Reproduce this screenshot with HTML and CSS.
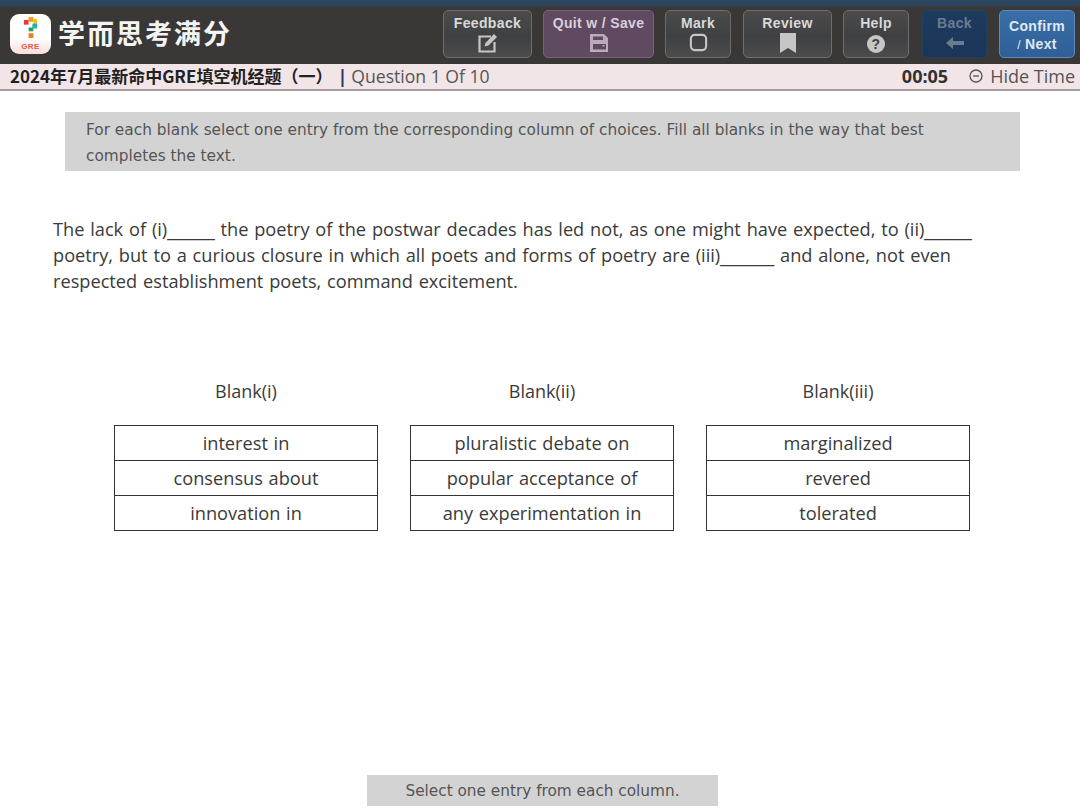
FILE: index.html
```html
<!DOCTYPE html>
<html lang="en">
<head>
<meta charset="utf-8">
<title>GRE</title>
<link rel="stylesheet" href="styles.css">
</head>
<body>
<header class="toolbar">
  <div class="brand">
    <div class="logo">
      <svg class="logo-mark" viewBox="0 0 20 24" width="19" height="23">
        <rect x="3" y="4" width="5" height="5" fill="#e23b3b"/>
        <rect x="8" y="1" width="5" height="5" fill="#f39a1e"/>
        <rect x="13" y="3" width="4" height="6" fill="#f2c21a"/>
        <rect x="12" y="8" width="5" height="5" fill="#22b0b5"/>
        <rect x="8" y="12" width="5" height="4" fill="#2f9e58"/>
        <rect x="8" y="18" width="5" height="5" fill="#ef7d22"/>
      </svg>
      <span class="logo-text">GRE</span>
    </div>
    <span class="brand-name">学而思考满分</span>
  </div>
  <nav class="buttons">
    <button class="btn w-feedback"><span>Feedback</span>
      <svg viewBox="0 0 20 20" width="20" height="20" fill="none" stroke="currentColor" stroke-width="2.200"><path d="M13 3.500H1.500v15h15V9"/><path d="M6.500 13.500l1-3.500 8.500-9 3 3-8.500 8.500z" fill="currentColor" stroke="none"/></svg>
    </button>
    <button class="btn btn-quit w-quit"><span>Quit w / Save</span>
      <svg viewBox="0 0 20 20" width="20" height="20" fill="currentColor"><path fill-rule="evenodd" d="M1 1h14l4 4v14H1zM4 3.500v3.500h10V3.500zM4 11v5.500h13V11z"/><rect x="13.500" y="12" width="2" height="1.500"/></svg>
    </button>
    <button class="btn w-mark"><span>Mark</span>
      <svg viewBox="0 0 20 20" width="19" height="19" fill="none" stroke="currentColor" stroke-width="2.200"><rect x="2" y="2" width="16" height="16" rx="4"/></svg>
    </button>
    <button class="btn w-review gap-review"><span>Review</span>
      <svg viewBox="0 0 16 20" width="16" height="20" fill="currentColor"><path d="M0 0h16v20l-8-5-8 5z"/></svg>
    </button>
    <button class="btn w-help"><span>Help</span>
      <svg class="icon-help" viewBox="0 0 18 18" width="18" height="18"><circle cx="9" cy="9" r="9" fill="currentColor"/><text x="9" y="14" text-anchor="middle" class="help-mark">?</text></svg>
    </button>
    <button class="btn btn-back w-back"><span>Back</span>
      <svg class="icon-back" viewBox="0 0 18 12" width="18" height="12" fill="currentColor"><path d="M0 6l7-6v4h11v4H7v4z"/></svg>
    </button>
    <button class="btn btn-next w-next"><span>Confirm</span><span class="next-line"><small>/</small> Next</span></button>
  </nav>
</header>

<div class="subbar">
  <div class="crumbs">
    <strong class="exam-title">2024年7月最新命中GRE填空机经题（一）</strong>
    <span class="divider">|</span>
    <span class="qnum">Question 1 Of 10</span>
  </div>
  <div class="timer">
    <strong class="clock">00:05</strong>
    <svg class="minus" viewBox="0 0 14 14" width="14" height="14" fill="none" stroke="currentColor" stroke-width="1.300"><circle cx="7" cy="7" r="6"/><path d="M4 7h6"/></svg>
    <span>Hide Time</span>
  </div>
</div>

<main class="content">
  <div class="instructions">For each blank select one entry from the corresponding column of choices. Fill all blanks in the way that best completes the text.</div>
  <p class="question">The lack of (i)<span class="gap">_____</span> the poetry of the postwar decades has led not, as one might have expected, to (ii)<span class="gap">_____</span> poetry, but to a curious closure in which all poets and forms of poetry are (iii)<span class="gap gap-short">______</span> and alone, not even respected establishment poets, command excitement.</p>
  <section class="blanks">
    <div class="blank">
      <h2>Blank(i)</h2>
      <ul><li>interest in</li><li>consensus about</li><li>innovation in</li></ul>
    </div>
    <div class="blank">
      <h2>Blank(ii)</h2>
      <ul><li>pluralistic debate on</li><li>popular acceptance of</li><li>any experimentation in</li></ul>
    </div>
    <div class="blank">
      <h2>Blank(iii)</h2>
      <ul><li>marginalized</li><li>revered</li><li>tolerated</li></ul>
    </div>
  </section>
</main>
<footer class="status">Select one entry from each column.</footer>
</body>
</html>
```
FILE: styles.css
```css
* { box-sizing: border-box; }
html, body { margin: 0; padding: 0; }
body { width: 1080px; height: 808px; overflow: hidden; background: #fff; font-family: "Open Sans", "Noto Sans CJK SC", sans-serif; color: #3a3a3a; display: flex; flex-direction: column; }

.toolbar { height: 64px; background: #3a3836; border-top: 6px solid #2c4560; display: flex; justify-content: space-between; align-items: flex-start; padding: 4px 5px 0 10px; }
.brand { display: flex; align-items: center; gap: 7px; height: 44px; margin-top: 2px; }
.logo { width: 41px; height: 40px; border-radius: 9px; background: linear-gradient(#fff 60%, #fbdcdc); display: flex; flex-direction: column; align-items: center; padding-top: 2px; }
.logo-mark { display: block; }
.logo-text { font: 700 8px/10px "Liberation Sans", sans-serif; color: #e2574c; letter-spacing: .4px; margin-top: 3px; }
.brand-name { font: 700 27px/34px "Noto Sans CJK SC", sans-serif; color: #f4f4f4; letter-spacing: 2px; margin-top: -2px; }

.buttons { display: flex; gap: 11px; }
.btn { height: 48px; padding: 3px 0 0; border: 1px solid #6d6d6d; border-radius: 5px; background: linear-gradient(#4b4b4b, #3f4042 55%, #4c4c4c); color: #d9d9d9; font: 700 14px/18px "Liberation Sans", sans-serif; letter-spacing: .35px; display: flex; flex-direction: column; align-items: center; gap: 1px; }
.btn svg { display: block; color: #c6c6c6; }
.w-feedback { width: 89px; }
.w-quit { width: 111px; }
.w-mark { width: 66px; }
.w-review { width: 89px; }
.w-help { width: 66px; }
.w-back { width: 65px; margin-left: 2px; }
.w-next { width: 76px; margin-left: 1px; }
.gap-review { margin-left: 1px; }
.btn-quit { background: #5f4a62; border-color: #77627a; color: #d9cfdb; }
.btn-quit svg { color: #b9aabc; }
.btn-back { background: linear-gradient(#1e3b5f, #1a3557); border-color: #23405f; color: #6a7c90; }
.btn-back svg { color: #6a7c90; }
.btn-next { background: linear-gradient(#3a6ea8, #2f5f96); border-color: #5b8abb; color: #dfe9f4; padding-top: 6px; gap: 0; }
.next-line small { font-size: 12px; font-weight: 400; }
.help-mark { font: 700 14px "Liberation Sans", sans-serif; fill: #3f4042; }
.icon-help { margin-top: 2px; }
.icon-back { margin-top: 4px; }

.subbar { height: 27px; background: #f1e5e7; border-bottom: 2px solid #a39c9e; display: flex; justify-content: space-between; align-items: center; padding: 0 5px 1px 10px; font-size: 18px; }
.crumbs { display: flex; align-items: center; }
.exam-title { font: 700 17px/24px "Noto Sans CJK SC", sans-serif; color: #222; }
.divider { font-weight: 700; color: #2c3560; margin: 0 4px 0 5px; }
.qnum { color: #555; font-size: 17.600px; }
.timer { display: flex; align-items: center; color: #555; }
.clock { color: #333; font-size: 18px; margin-right: 21px; }
.minus { margin-right: 7px; }

.content { flex: 1; display: flex; flex-direction: column; padding: 21px 0 0; }
.instructions { width: 955px; height: 59px; margin-left: 65px; padding: 5px 80px 0 21px; background: #d3d3d3; color: #555; font: 15.350px/26px "DejaVu Sans", sans-serif; }
.question { margin: 45px 0 0 53px; width: 935px; font-size: 18.200px; line-height: 26px; word-spacing: 1.100px; color: #3a3a3a; }
.gap { display: inline-block; font-family: "DejaVu Sans", sans-serif; font-size: 19px; line-height: 20px; word-spacing: 0; }
.gap-short { font-size: 18px; }
.blanks { display: flex; gap: 32px; margin: 84px 0 0 114px; }
.blank { width: 264px; }
.blank h2 { margin: 0 0 21px; font-size: 18px; line-height: 26px; font-weight: 400; text-align: center; color: #3a3a3a; }
.blank ul { margin: 0; padding: 0; list-style: none; border: 1px solid #333; }
.blank li { height: 34px; line-height: 34px; font-size: 18.200px; word-spacing: 1px; text-align: center; color: #3a3a3a; }
.blank li + li { height: 35px; border-top: 1px solid #333; }

.status { width: 351px; height: 31px; margin: 0 0 2px 367px; background: #d3d3d3; color: #555; font: 15.300px/33px "DejaVu Sans", sans-serif; text-align: center; }
```
